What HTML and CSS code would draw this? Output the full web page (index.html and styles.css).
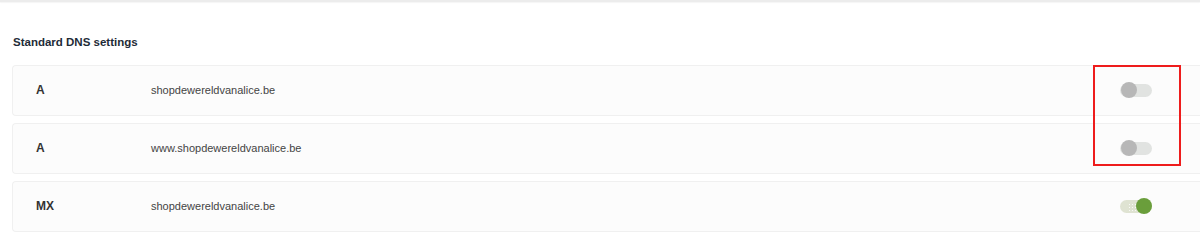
FILE: index.html
```html
<!DOCTYPE html>
<html>
<head>
<meta charset="utf-8">
<link rel="stylesheet" href="styles.css">
</head>
<body>
<div class="topbar"></div>
<section class="panel">
  <h2 class="title">Standard DNS settings</h2>
  <div class="rows">
    <div class="row">
      <span class="type">A</span>
      <span class="value">shopdewereldvanalice.be</span>
      <span class="toggle"><span class="knob"></span></span>
    </div>
    <div class="row">
      <span class="type">A</span>
      <span class="value">www.shopdewereldvanalice.be</span>
      <span class="toggle"><span class="knob"></span></span>
    </div>
    <div class="row">
      <span class="type">MX</span>
      <span class="value">shopdewereldvanalice.be</span>
      <span class="toggle on"><span class="dots"></span><span class="knob"></span></span>
    </div>
    <div class="highlight"></div>
  </div>
</section>
</body>
</html>
```

FILE: styles.css
```css
* { box-sizing: border-box; }
html, body { margin: 0; padding: 0; background: #fff; }
body {
  font-family: "Liberation Sans", Arial, sans-serif;
  font-size: 12px;
  color: #333;
  width: 1200px;
  height: 237px;
  overflow: hidden;
}
.topbar {
  height: 2px;
  background: #ececec;
  box-shadow: 0 1px 1px rgba(0,0,0,0.04);
}
.panel {
  padding: 0 0 0 12px;
}
.title {
  margin: 0;
  padding: 32px 0 0 1px;
  height: 63px;
  font-size: 11.5px;
  line-height: 16px;
  font-weight: bold;
  color: #1e2b37;
}
.rows {
  position: relative;
  display: flex;
  flex-direction: column;
  gap: 7px;
}
.row {
  height: 51px;
  display: flex;
  align-items: center;
  background: #fcfcfc;
  border: 1px solid #f0f0f0;
  border-right: none;
  border-radius: 4px 0 0 4px;
  padding: 0 48px 1px 23px;
}
.type {
  width: 115px;
  font-weight: bold;
  color: #333;
}
.value {
  flex: 1;
  font-size: 11px;
  color: #444;
}
.toggle {
  position: relative;
  width: 32px;
  height: 13px;
  border-radius: 7px;
  background: #e1e3e1;
}
.toggle .knob {
  position: absolute;
  left: 1px;
  top: -2px;
  width: 16px;
  height: 16px;
  border-radius: 50%;
  background: #b7b7b7;
}
.toggle.on {
  background: #dfe3d2;
}
.toggle.on .knob {
  left: auto;
  right: 0;
  background: #6a9e3b;
}
.toggle .dots {
  position: absolute;
  left: 8px;
  top: 3px;
  width: 8px;
  height: 8px;
  background-image: radial-gradient(circle, #ffffff 0.6px, transparent 0.9px);
  background-size: 3px 3px;
  opacity: 0.8;
}
.highlight {
  position: absolute;
  left: 1081px;
  top: 0;
  width: 88px;
  height: 101px;
  border: 2px solid #ee1c1c;
  pointer-events: none;
}
```
